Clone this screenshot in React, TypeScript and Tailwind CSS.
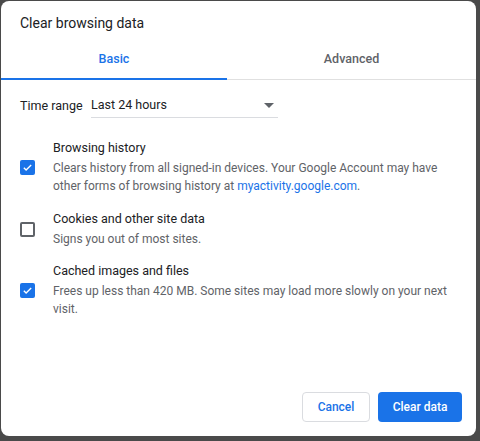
import React from "react";

function Check({ checked }: { checked: boolean }) {
  if (checked) {
    return (
      <div className="w-[15px] h-[15px] rounded-[2px] bg-[#1a73e8] flex items-center justify-center">
        <svg width="11" height="11" viewBox="0 0 24 24">
          <path d="M4 12.5l5 5L20 6.5" fill="none" stroke="#fff" strokeWidth="3" />
        </svg>
      </div>
    );
  }
  return <div className="w-[15px] h-[15px] rounded-[2px] border-2 border-[#5f6368]" />;
}

function Item({
  checked,
  title,
  children,
}: {
  checked: boolean;
  title: string;
  children: React.ReactNode;
}) {
  return (
    <div className="flex items-center">
      <div className="w-[33px] shrink-0 flex">
        <Check checked={checked} />
      </div>
      <div className="text-[12px] leading-[18px]">
        <div className="text-[#202124] text-[12.5px] mb-[2px]">{title}</div>
        <div className="text-[#5f6368]">{children}</div>
      </div>
    </div>
  );
}

export default function App() {
  return (
    <div
      className="w-[480px] h-[441px] bg-[#4a4a4a] pt-[1px] pl-[1px] pr-[4px] pb-[5px]"
      style={{ fontFamily: "Roboto, 'Liberation Sans', sans-serif" }}
    >
      <div className="bg-white w-full h-full rounded-[8px] flex flex-col">
        <div className="pl-[19px] pt-[12px] text-[14px] leading-[20px] text-[#202124]">
          Clear browsing data
        </div>
        <div className="mt-[7px] flex border-b border-[#e0e0e0]">
          <div className="w-[226px] h-[40px] flex items-center justify-center text-[12.5px] font-medium text-[#1a73e8] border-b-2 border-[#1a73e8] mb-[-1px]">
            Basic
          </div>
          <div className="flex-1 h-[39px] flex items-center justify-center text-[12.5px] font-medium text-[#5f6368]">
            Advanced
          </div>
        </div>
        <div className="pl-[19px] pt-[14px] flex items-center text-[12.5px] text-[#202124]">
          <div className="w-[71px]">Time range</div>
          <div className="w-[187px] h-[24px] flex items-center justify-between border-b border-[#dadce0] pr-[4px]">
            <span>Last 24 hours</span>
            <svg width="10" height="5" viewBox="0 0 10 5">
              <path d="M0 0h10L5 5z" fill="#5f6368" />
            </svg>
          </div>
        </div>
        <div className="pl-[19px] pr-[14px] pt-[21px] flex flex-col">
          <Item checked title="Browsing history">
            Clears history from all signed-in devices. Your Google Account may have other forms of
            browsing history at <span className="text-[#1a73e8]">myactivity.google.com</span>.
          </Item>
          <div className="h-[15px]" />
          <Item checked={false} title="Cookies and other site data">
            Signs you out of most sites.
          </Item>
          <div className="h-[14px]" />
          <Item checked title="Cached images and files">
            Frees up less than 420 MB. Some sites may load more slowly on your next visit.
          </Item>
        </div>
        <div className="mt-auto flex justify-end gap-[8px] pr-[14px] pb-[14px]">
          <button className="w-[68px] h-[30px] rounded-[4px] border border-[#dadce0] text-[12px] font-medium text-[#1a73e8] bg-white">
            Cancel
          </button>
          <button className="w-[84px] h-[30px] rounded-[4px] bg-[#1a73e8] text-[12px] font-medium text-white">
            Clear data
          </button>
        </div>
      </div>
    </div>
  );
}
